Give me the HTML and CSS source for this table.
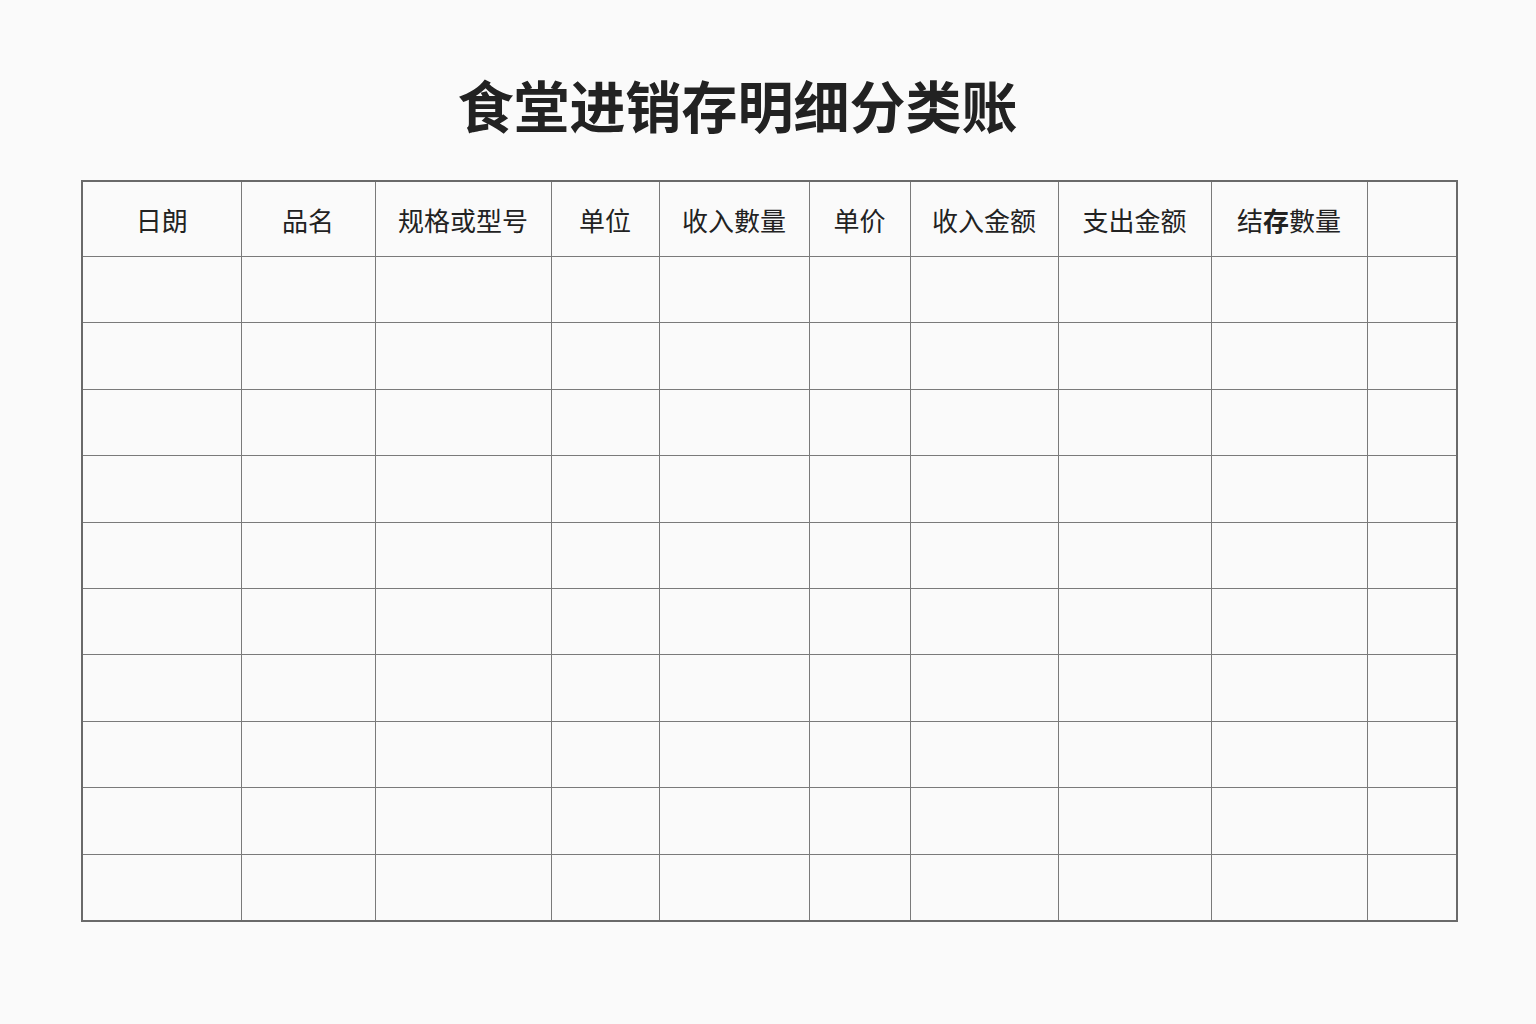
FILE: index.html
```html
<!DOCTYPE html>
<html lang="zh-CN">
<head>
<meta charset="utf-8">
<title>食堂进销存明细分类账</title>
<link rel="stylesheet" href="styles.css">
</head>
<body>
<div class="page">
  <h1 class="title">食堂进销存明细分类账</h1>
  <table class="ledger">
    <colgroup>
      <col class="c1"><col class="c2"><col class="c3"><col class="c4"><col class="c5">
      <col class="c6"><col class="c7"><col class="c8"><col class="c9"><col class="c10">
    </colgroup>
    <thead>
      <tr>
        <th>日朗</th><th>品名</th><th>规格或型号</th><th>单位</th><th>收入數量</th>
        <th>单价</th><th>收入金额</th><th>支出金额</th><th>结<b class="bold">存</b>數量</th><th></th>
      </tr>
    </thead>
    <tbody>
      <tr><td></td><td></td><td></td><td></td><td></td><td></td><td></td><td></td><td></td><td></td></tr>
      <tr><td></td><td></td><td></td><td></td><td></td><td></td><td></td><td></td><td></td><td></td></tr>
      <tr><td></td><td></td><td></td><td></td><td></td><td></td><td></td><td></td><td></td><td></td></tr>
      <tr><td></td><td></td><td></td><td></td><td></td><td></td><td></td><td></td><td></td><td></td></tr>
      <tr><td></td><td></td><td></td><td></td><td></td><td></td><td></td><td></td><td></td><td></td></tr>
      <tr><td></td><td></td><td></td><td></td><td></td><td></td><td></td><td></td><td></td><td></td></tr>
      <tr><td></td><td></td><td></td><td></td><td></td><td></td><td></td><td></td><td></td><td></td></tr>
      <tr><td></td><td></td><td></td><td></td><td></td><td></td><td></td><td></td><td></td><td></td></tr>
      <tr><td></td><td></td><td></td><td></td><td></td><td></td><td></td><td></td><td></td><td></td></tr>
      <tr><td></td><td></td><td></td><td></td><td></td><td></td><td></td><td></td><td></td><td></td></tr>
    </tbody>
  </table>
</div>
</body>
</html>
```
FILE: styles.css
```css
html, body {
  margin: 0;
  padding: 0;
  background: #fafafa;
}
body {
  font-family: "Noto Sans CJK SC", "Noto Sans", sans-serif;
  color: #222;
}
.page {
  width: 1536px;
  height: 1024px;
  box-sizing: border-box;
  padding: 76px 0 0 81px;
}
.title {
  margin: 0 0 48px 0;
  width: 1313px;
  text-align: center;
  font-size: 56px;
  line-height: 56px;
  font-weight: 700;
  color: #222;
}
.ledger {
  border-collapse: collapse;
  table-layout: fixed;
  width: 1375px;
  border: 2px solid #6a6a6a;
}
.ledger th, .ledger td {
  border: 1.5px solid #7a7a7a;
  padding: 0;
  text-align: center;
}
.ledger th {
  height: 74px;
  font-size: 26px;
  font-weight: 400;
  color: #222;
}
.ledger td {
  height: 65.4px;
}
.bold { font-weight: 700; }
.c1 { width: 159px; }
.c2 { width: 134px; }
.c3 { width: 176px; }
.c4 { width: 108px; }
.c5 { width: 150px; }
.c6 { width: 101px; }
.c7 { width: 148px; }
.c8 { width: 153px; }
.c9 { width: 156px; }
.c10 { width: 90px; }
```
